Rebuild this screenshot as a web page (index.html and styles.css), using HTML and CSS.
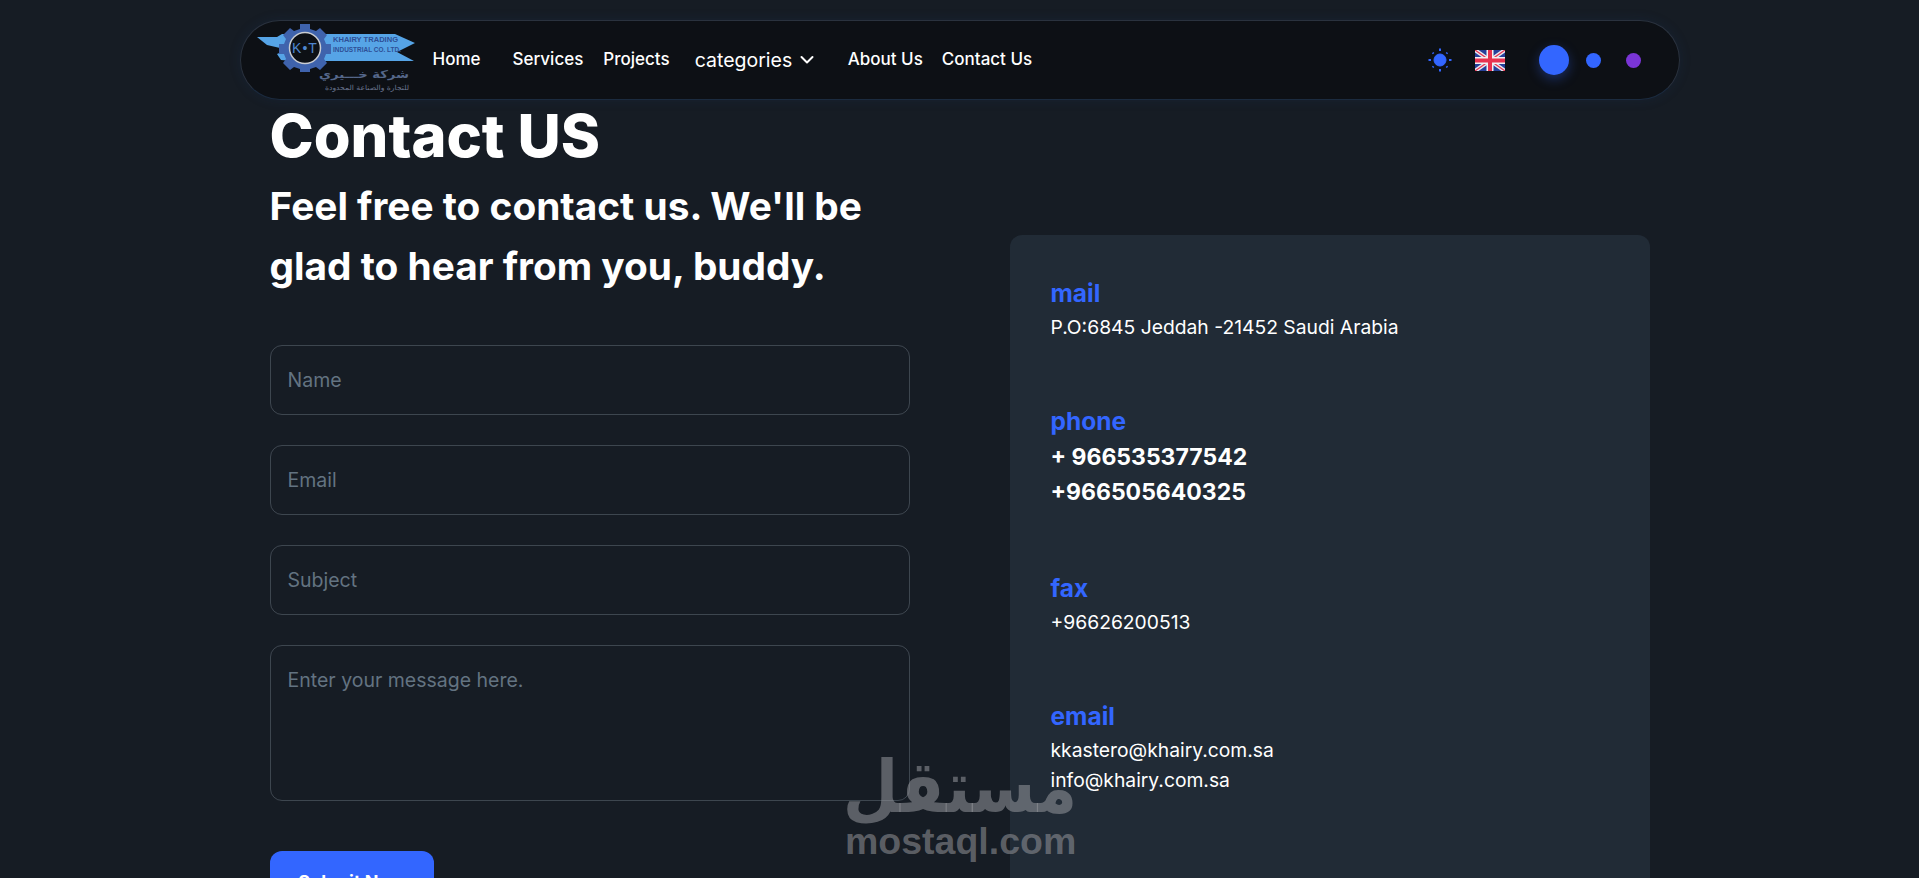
FILE: index.html
```html
<!DOCTYPE html>
<html lang="en">
<head>
<meta charset="utf-8">
<title>Contact US</title>
<link rel="stylesheet" href="styles.css">
</head>
<body>
<header class="nav">
  <svg class="logo" width="160" height="70" viewBox="0 0 160 70">
    <path class="logo-banner" d="M0 13H20L25 10H27L36 10H138L158 19L140 28L157 37H36L24 36L20 30L29 26L23 24L10 21Z"/>
    <path class="logo-gear" d="M43 0H53V5L59 7L63 4L70 11L67 15L69 20H74V30H69L67 35L70 39L63 46L59 43L53 45V48H43V45L37 43L33 46L26 39L29 35L27 30H22V20H27L29 15L26 11L33 4L37 7L43 5Z"/>
    <circle class="logo-ring" cx="48" cy="24" r="15.5"/>
    <text class="logo-kt" x="48" y="29" text-anchor="middle">K•T</text>
    <text class="logo-en" x="76" y="18" textLength="65" lengthAdjust="spacingAndGlyphs">KHAIRY TRADING</text>
    <text class="logo-en" x="76" y="28" textLength="68" lengthAdjust="spacingAndGlyphs">INDUSTRIAL CO. LTD.</text>
    <text class="logo-ar1" x="152" y="54" text-anchor="start" direction="rtl" textLength="90" lengthAdjust="spacingAndGlyphs">شركة خـــيري</text>
    <text class="logo-ar2" x="152" y="66" text-anchor="start" direction="rtl" textLength="84" lengthAdjust="spacingAndGlyphs">للتجارة والصناعة المحدودة</text>
  </svg>
  <nav class="links">
    <a class="link link-home">Home</a>
    <a class="link">Services</a>
    <a class="link link-projects">Projects</a>
    <a class="link link-cat">categories
      <svg class="chev" width="16" height="16" viewBox="0 0 16 16"><path d="M2.5 5L8 10.5L13.5 5"/></svg>
    </a>
    <a class="link">About Us</a>
    <a class="link link-contact">Contact Us</a>
  </nav>
  <div class="tools">
    <svg class="sun" width="24" height="24" viewBox="0 0 24 24">
      <circle cx="12" cy="12" r="6"/>
      <path d="M12 .5V3M12 21V23.500M.500 12H3M21 12H23.500M4.600 4.600L5.600 5.600M18.400 18.400L19.400 19.400M4.600 19.400L5.600 18.400M18.400 5.600L19.400 4.600"/>
    </svg>
    <svg class="flag" width="30" height="21" viewBox="0 0 30 21">
      <rect width="30" height="21" fill="#25409a"/>
      <path d="M0 0L30 21M30 0L0 21" stroke="#e8e8ee" stroke-width="4"/>
      <path d="M0 0L30 21M30 0L0 21" stroke="#e8324f" stroke-width="1.200"/>
      <path d="M15 0V21M0 10.500H30" stroke="#f1f1f4" stroke-width="7"/>
      <path d="M15 0V21M0 10.500H30" stroke="#e8324f" stroke-width="4"/>
    </svg>
    <span class="dot dot-big"></span>
    <span class="dot dot-blue"></span>
    <span class="dot dot-purple"></span>
  </div>
</header>

<main class="page">
  <section class="form-col">
    <h1 class="title">Contact US</h1>
    <h2 class="subtitle">Feel free to contact us. We'll be glad to hear from you, buddy.</h2>
    <form class="form">
      <input class="field" placeholder="Name">
      <input class="field" placeholder="Email">
      <input class="field" placeholder="Subject">
      <textarea class="field area" placeholder="Enter your message here."></textarea>
      <button class="submit" type="button">Submit Now</button>
    </form>
  </section>
  <aside class="card">
    <div class="item item-mail">
      <h3 class="label">mail</h3>
      <p class="text">P.O:6845 Jeddah -21452 Saudi Arabia</p>
    </div>
    <div class="item item-phone">
      <h3 class="label">phone</h3>
      <p class="phone">+ 966535377542</p>
      <p class="phone">+966505640325</p>
    </div>
    <div class="item item-fax">
      <h3 class="label">fax</h3>
      <p class="text">+96626200513</p>
    </div>
    <div class="item">
      <h3 class="label">email</h3>
      <p class="text">kkastero@khairy.com.sa</p>
      <p class="text">info@khairy.com.sa</p>
    </div>
  </aside>
</main>

<div class="mark">
  <div class="mark-ar" dir="rtl" lang="ar">مستقل</div>
  <div class="mark-en">mostaql.com</div>
</div>
</body>
</html>
```
FILE: styles.css
```css
* { box-sizing: border-box; }
html, body { height: 100%; overflow: hidden; }
body {
  margin: 0;
  background: #161c24;
  color: #fff;
  font-family: Inter, "Liberation Sans", sans-serif;
}
.nav {
  display: flex;
  align-items: center;
  width: 1440px;
  height: 80px;
  margin: 20px auto 0;
  padding: 0 37.5px 0 16px;
  background: #0d1015;
  border: 1px solid #2a323e;
  border-bottom-color: #1b2b3f;
  border-radius: 40px;
  box-shadow: 0 0 12px rgba(30, 60, 110, .18);
}
.logo { flex: none; margin-top: -2px; }
.logo-banner { fill: #56a4e6; }
.logo-gear { fill: #3f63ad; }
.logo-ring { fill: #0d1015; stroke: #c9ccd2; stroke-width: 1.500; }
.logo-kt { fill: #4f86cf; font: 400 14px "Liberation Sans", sans-serif; letter-spacing: 1px; }
.logo-en { fill: #2e4f96; font: 700 8px "Liberation Sans", sans-serif; }
.logo-ar1 { fill: #55678a; font: 700 11px "DejaVu Sans", sans-serif; }
.logo-ar2 { fill: #6b7690; font: 400 7px "DejaVu Sans", sans-serif; }
.links {
  display: flex;
  align-items: center;
  gap: 20px;
  margin-left: 16px;
  margin-top: -2px;
  font-size: 17px;
  font-weight: 500;
}
.link { color: #fff; white-space: nowrap; }
.link-home { margin-right: 12px; }
.link-projects { margin-right: 5px; }
.link-contact { margin-left: -1px; }
.link-cat {
  display: flex;
  align-items: center;
  gap: 7px;
  margin-top: 2px;
  margin-right: 12.5px;
  font-size: 19.5px;
  font-weight: 400;
}
.chev { fill: none; stroke: #fff; stroke-width: 2; stroke-linecap: round; stroke-linejoin: round; }
.tools {
  display: flex;
  align-items: center;
  margin-left: auto;
}
.sun { fill: #3366ff; stroke: #3366ff; }
.sun path { fill: none; stroke-width: 2; }
.flag { margin-left: 23px; }
.dot { display: block; border-radius: 50%; }
.dot-big {
  width: 30px;
  height: 30px;
  margin-left: 34px;
  background: #3366ff;
  box-shadow: 0 4px 12px rgba(51, 102, 255, .35);
}
.dot-blue { width: 15px; height: 15px; margin-left: 17.5px; background: #3366ff; }
.dot-purple { width: 15px; height: 15px; margin-left: 25px; background: #7a35d6; }

.page {
  display: grid;
  grid-template-columns: 640px 640px;
  justify-content: center;
  column-gap: 100px;
}
.title {
  margin: -1px 0 0;
  font-size: 59.5px;
  line-height: 72px;
  font-weight: 800;
}
.subtitle {
  margin: 5px 0 0;
  font-size: 38.8px;
  line-height: 60px;
  font-weight: 700;
}
.form { display: flex; flex-direction: column; align-items: flex-start; margin-top: 49px; }
.field {
  display: block;
  width: 640px;
  height: 70px;
  margin-bottom: 30px;
  padding: 0 17px;
  background: transparent;
  border: 1px solid rgba(145, 158, 171, .32);
  border-radius: 12px;
  color: #fff;
  font: 400 19.5px Inter, "Liberation Sans", sans-serif;
  outline: none;
  resize: none;
}
.field::placeholder { color: #637381; opacity: 1; }
.area { height: 156px; margin-bottom: 50px; padding-top: 22px; }
.submit {
  width: 164px;
  height: 60px;
  background: #3366ff;
  border: 0;
  border-radius: 12px;
  color: #fff;
  font: 700 18px Inter, "Liberation Sans", sans-serif;
}
.card {
  height: 700px;
  margin-top: 135px;
  padding: 40px 40px 40px 41px;
  background: #212b36;
  border-radius: 12px;
}
.item { margin-bottom: 61px; }
.item-mail { margin-bottom: 61px; }
.item-phone { margin-bottom: 60px; }
.label {
  margin: 0 0 1px;
  color: #3366ff;
  font-size: 24.5px;
  line-height: 36px;
  font-weight: 700;
}
.text {
  margin: 0;
  font-size: 19.3px;
  line-height: 30px;
  font-weight: 400;
}
.phone {
  margin: 0;
  font-size: 23px;
  line-height: 35px;
  font-weight: 700;
}
.mark {
  position: absolute;
  left: 845px;
  top: 743px;
  width: 230px;
  text-align: center;
  color: rgba(150, 152, 156, .55);
  pointer-events: none;
}
.mark-ar {
  display: flex;
  justify-content: center;
  margin-top: 6px;
  font: 700 72px/72px "DejaVu Sans", sans-serif;
  white-space: nowrap;
  transform: translateY(2px) scaleX(.89);
}
.mark-en { font: 700 37.5px/40px "Liberation Sans", sans-serif; }
```
